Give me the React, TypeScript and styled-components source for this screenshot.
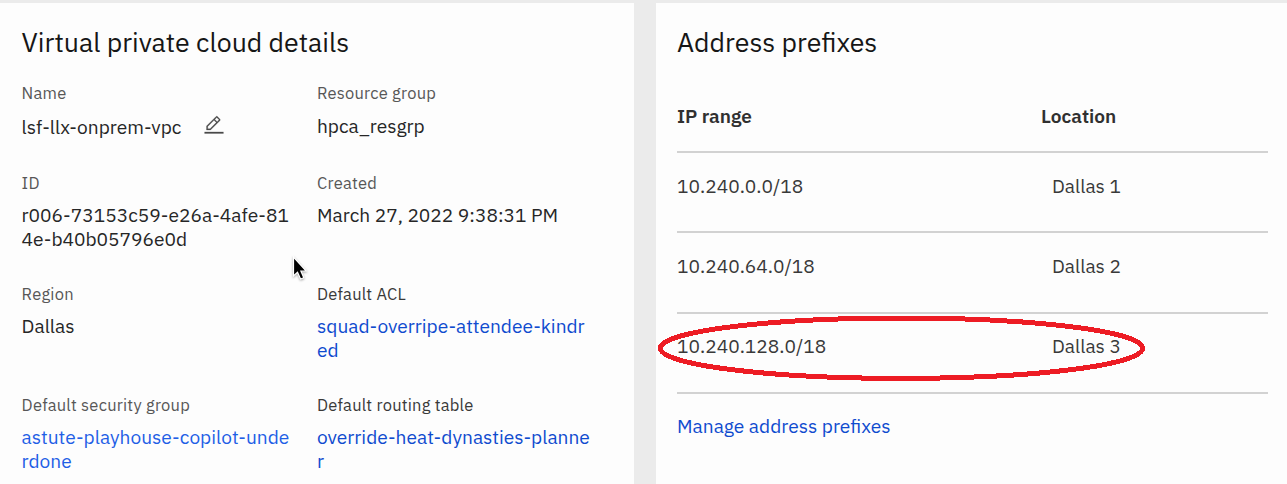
import React from "react";
import styled, { createGlobalStyle } from "styled-components";

const GlobalStyle = createGlobalStyle`
  * { box-sizing: border-box; }
  body {
    margin: 0;
    background: #ebebeb;
    font-family: "IBM Plex Sans", Roboto, "Noto Sans", sans-serif;
    color: #262626;
    overflow: hidden;
  }
`;

const Page = styled.main`
  position: relative;
  display: grid;
  grid-template-columns: 634px 1fr;
  column-gap: 22px;
  height: 484px;
  padding-top: 3px;
`;

const Card = styled.section<{ $inset: number }>`
  background: #fdfdfd;
  padding: 23px 19px 0 ${(p) => p.$inset}px;
  overflow: hidden;
`;

const Title = styled.h2`
  margin: 0;
  font-size: 26.7px;
  font-weight: 400;
  line-height: 32px;
  color: #161616;
  white-space: nowrap;
`;

const Details = styled.dl`
  display: grid;
  grid-template-columns: 271px 275px;
  grid-template-rows: 90px 111px 111px 90px;
  column-gap: 24.4px;
  margin: 25px 0 0;
`;

const Label = styled.dt<{ $dark?: boolean }>`
  font-size: 16.5px;
  line-height: 20px;
  letter-spacing: 0.22px;
  color: ${(p) => (p.$dark ? "#393939" : "#575757")};
`;

const Value = styled.dd<{ $offset?: number }>`
  display: flex;
  align-items: center;
  gap: 23px;
  margin: ${(p) => p.$offset ?? 10}px 0 0;
  font-size: 19.15px;
  line-height: 24px;
  word-break: break-all;
`;

const Link = styled.a<{ $bright?: boolean }>`
  color: ${(p) => (p.$bright ? "#1f5fe6" : "#0f4bcf")};
  text-decoration: none;
`;

const EditIcon = styled.svg`
  display: block;
  width: 20px;
  height: 20px;
  margin-top: -4px;
`;

const Table = styled.table`
  width: 100%;
  margin-top: 22px;
  border-collapse: collapse;
  table-layout: fixed;
`;

const HeadCell = styled.th`
  height: 72px;
  padding: 0;
  border-bottom: 2px solid #d2d2d2;
  text-align: left;
  font-size: 19.1px;
  font-weight: 600;
  color: #303030;

  &:first-child { width: 364px; }
`;

const Cell = styled.td`
  height: 80px;
  padding: 0 0 13px;
  border-bottom: 2px solid #d2d2d2;
  font-size: 19.15px;
  color: #393939;

  & + & { padding-left: 11px; }
  tr:nth-child(2) > & { height: 81px; padding-bottom: 14px; }
  tr:nth-child(3) > & { padding-bottom: 15px; }
`;

const Manage = styled.div`
  margin-top: 19px;
  font-size: 19.15px;
  line-height: 26px;
`;

const Highlight = styled.svg`
  position: absolute;
  left: 656px;
  top: 312px;
  width: 492px;
  height: 72px;
`;

const Pointer = styled.svg`
  position: absolute;
  left: 289px;
  top: 254px;
  width: 20px;
  height: 28px;
  filter: drop-shadow(0 1px 1px rgba(0, 0, 0, 0.35));
`;

type Detail = {
  label: string;
  value: string;
  offset?: number;
  link?: boolean;
  bright?: boolean;
  editable?: boolean;
  dark?: boolean;
};

const details: Detail[] = [
  { label: "Name", value: "lsf-llx-onprem-vpc", editable: true, offset: 12 },
  { label: "Resource group", value: "hpca_resgrp", offset: 11 },
  { label: "ID", value: "r006-73153c59-e26a-4afe-814e-b40b05796e0d" },
  { label: "Created", value: "March 27, 2022 9:38:31 PM" },
  { label: "Region", value: "Dallas" },
  { label: "Default ACL", value: "squad-overripe-attendee-kindred", link: true, dark: true },
  { label: "Default security group", value: "astute-playhouse-copilot-underdone", link: true, bright: true },
  { label: "Default routing table", value: "override-heat-dynasties-planner", link: true, dark: true },
];

const prefixes = [
  { range: "10.240.0.0/18", location: "Dallas 1" },
  { range: "10.240.64.0/18", location: "Dallas 2" },
  { range: "10.240.128.0/18", location: "Dallas 3" },
];

export default function App() {
  return (
    <>
      <GlobalStyle />
      <Page>
        <Card $inset={21.6}>
          <Title>Virtual private cloud details</Title>
          <Details>
            {details.map((d) => (
              <div key={d.label}>
                <Label $dark={d.dark}>{d.label}</Label>
                <Value $offset={d.offset}>
                  {d.link ? <Link $bright={d.bright}>{d.value}</Link> : d.value}
                  {d.editable && (
                    <EditIcon viewBox="0 0 32 32" fill="#4a4a4a" aria-label="Edit">
                      <path d="M1 27h30v2.6H1zM25.4 9c.8-.8.8-2 0-2.8l-3.6-3.6c-.8-.8-2-.8-2.8 0l-15 15V24h6.4l15-15zm-5-5L24 7.6l-3 3L17.4 7l3-3zM6 22v-3.6l10-10 3.6 3.6-10 10H6z" stroke="#4a4a4a" strokeWidth="0.4" />
                    </EditIcon>
                  )}
                </Value>
              </div>
            ))}
          </Details>
        </Card>
        <Card $inset={21}>
          <Title>Address prefixes</Title>
          <Table>
            <thead>
              <tr>
                <HeadCell>IP range</HeadCell>
                <HeadCell>Location</HeadCell>
              </tr>
            </thead>
            <tbody>
              {prefixes.map((p) => (
                <tr key={p.range}>
                  <Cell>{p.range}</Cell>
                  <Cell>{p.location}</Cell>
                </tr>
              ))}
            </tbody>
          </Table>
          <Manage>
            <Link>Manage address prefixes</Link>
          </Manage>
        </Card>
        <Highlight viewBox="0 0 492 72" fill="none" shapeRendering="crispEdges">
          <ellipse cx="245.5" cy="36.2" rx="241.2" ry="30.2" stroke="#ed1c24" strokeWidth="5" />
        </Highlight>
        <Pointer viewBox="0 0 20 28">
          <path
            d="M4.5 3V22L8.5 18.3L11.6 25L14.8 23.7L11.9 17H17.2Z"
            fill="#000"
            stroke="#fff"
            strokeWidth="1.2"
          />
        </Pointer>
      </Page>
    </>
  );
}
